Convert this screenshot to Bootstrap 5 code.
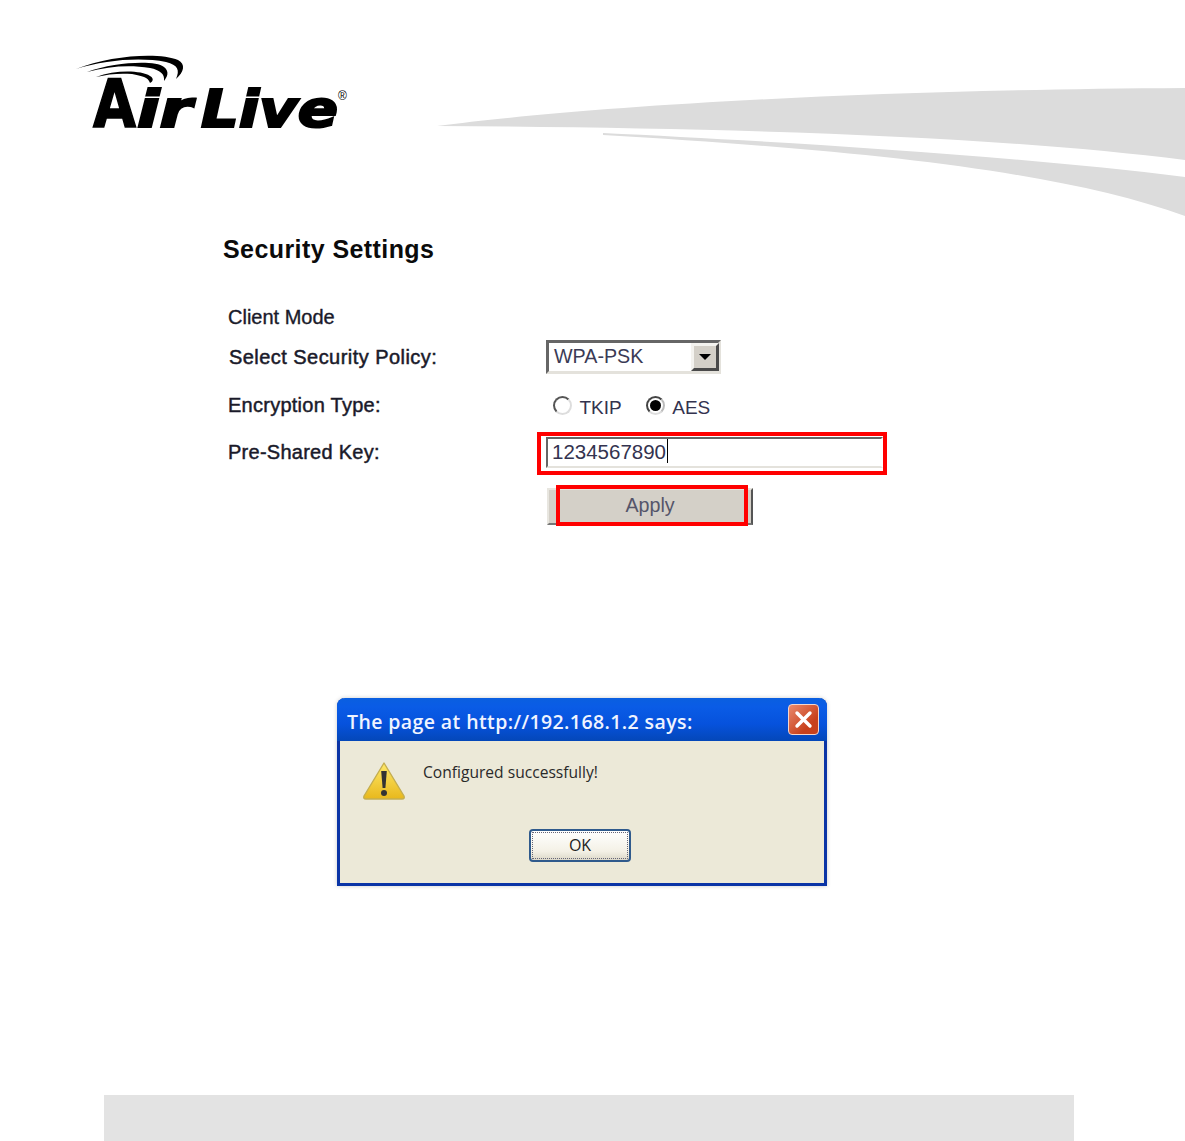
<!DOCTYPE html>
<html lang="en">
<head>
    <meta charset="UTF-8">
    <title>Security Settings</title>
    <link href="https://cdn.jsdelivr.net/npm/bootstrap@5.3.1/dist/css/bootstrap.min.css" rel="stylesheet">
    <style>
        html, body { height: 1141px; overflow: hidden; }
        body { background: #fff; color: #000; font-family: "Liberation Sans", Arial, sans-serif; }

        .page-top { height: 216px; }
        .logo-svg { width: 290px; height: 100px; margin: 50px 0 0 70px; flex: none; }
        .logo-word { font-family: "DejaVu Sans", sans-serif; font-weight: 700; font-style: italic; font-size: 51px; }
        .logo-cap { font-size: 66px; font-style: normal; }
        .swoosh { width: 748px; height: 128px; margin: 88px 0 0 77px; flex: none; }

        .settings { margin: 18px 0 0 223px; height: 464px; }
        .settings-title { font-size: 25px; font-weight: 700; line-height: 30px; margin: 0 0 38px; color: #0b0b0b; letter-spacing: .42px; }
        .form-line { display: flex; align-items: center; color: #1a1a2a; font-size: 20px; -webkit-text-stroke: .35px #1a1a2a; }
        .form-line .lbl { width: 323px; padding-left: 5px; flex: none; }
        .line-client { height: 30px; }
        .line-policy { height: 50px; }
        .line-policy .lbl { padding-left: 6px; letter-spacing: .45px; -webkit-text-stroke-width: .5px; }
        .line-enc { height: 45px; }
        .line-enc .lbl, .line-key .lbl { letter-spacing: .26px; -webkit-text-stroke-width: .45px; }
        .line-key { height: 50px; }
        .line-apply { height: 50px; margin-top: 4px; }

        .fake-select { width: 175px; height: 34px; border: 3px solid; border-color: #666 #e4e2dc #e4e2dc #666; display: flex; align-items: stretch; font-size: 19.7px; color: #3a3a55; -webkit-text-stroke: 0; line-height: 26px; padding-left: 5px; }
        .fake-select .val { flex: 1; }
        .sel-arrow { width: 28px; margin-right: -1px; background: #d4d0c8; border: 3px solid; border-color: #f4f3ef #4a4a4a #4a4a4a #f4f3ef; display: flex; align-items: center; justify-content: center; }
        .sel-arrow::after { content: ""; border: 6px solid transparent; border-top: 6px solid #000; border-bottom: 0; }

        .radio-opt { display: inline-flex; align-items: center; font-size: 19px; color: #33334f; -webkit-text-stroke: 0; }
        .radio-dot { width: 19px; height: 19px; border-radius: 50%; border: 2px solid #555; border-right-color: #ddd; border-bottom-color: #ddd; background: #fff; margin: -6px 7.5px 0 0; display: flex; align-items: center; justify-content: center; }
        .radio-dot.on { border-color: #444 #bbb #ddd #444; }
        .radio-dot.on::after { content: ""; width: 11px; height: 11px; border-radius: 50%; background: #000; }
        .radio-wrap { margin-left: 7px; display: flex; gap: 24px; padding-top: 7px; }

        .key-wrap { position: relative; width: 337px; height: 31px; }
        .key-input { height: 31px; border: 2px solid; border-color: #666 #fff #e4e2dc #666; padding: 0 0 2px 4px; font-size: 20.5px; line-height: 27px; color: #33334f; -webkit-text-stroke: 0; display: flex; align-items: center; }
        .caret-bar { width: 1px; height: 24px; background: #000; margin-left: 1px; }
        .red-frame { position: absolute; border: 4px solid #f00; pointer-events: none; }
        .key-wrap .red-frame { left: -9px; top: -5px; width: 350px; height: 43px; }

        .apply-wrap { position: relative; margin-left: 1px; width: 206px; height: 37px; }
        .apply-fake { width: 206px; height: 37px; background: #d4d0c8; border: 2px solid; border-color: #e8e6e0 #555 #777 #e8e6e0; font-size: 19.7px; color: #55556a; -webkit-text-stroke: 0; display: flex; align-items: center; justify-content: center; }
        .apply-wrap .red-frame { left: 9px; top: -3px; width: 192px; height: 41px; }

        .alert-box { width: 490px; height: 188px; margin-left: 337px; background: #ece9d8; border: 3px solid #0a34a6; border-top: 0; border-radius: 8px 8px 0 0; box-shadow: 0 0 4px #ccc; }
        .alert-head { height: 43px; margin: 0 -3px; border-radius: 8px 8px 0 0; background: linear-gradient(#0a5fe0, #0a5ce6 20%, #0652dd 60%, #0447b8); color: #f0f4ff; display: flex; align-items: center; justify-content: space-between; padding: 0 8px 0 10px; font-family: "Open Sans", sans-serif; font-weight: 600; font-size: 19.5px; letter-spacing: .4px; }
        .alert-title { padding-top: 4px; }
        .close-x { width: 31px; height: 31px; border-radius: 4px; border: 1px solid #f3d5cc; background: linear-gradient(135deg, #e98a6d, #c8401c 70%); display: flex; align-items: center; justify-content: center; }
        .alert-body { display: flex; padding: 20px 0 0 22px; height: 82px; }
        .warn-svg { width: 44px; height: 40px; flex: none; }
        .alert-msg { margin: 2px 0 0 17px; font-family: "Open Sans", sans-serif; font-size: 15.6px; line-height: 18px; color: #2a2a2a; }
        .ok-row { display: flex; padding-left: 189px; margin-top: 6px; }
        .ok-fake { width: 102px; height: 33px; padding-bottom: 1px; border: 2px solid #2f5a8c; border-radius: 4px; background: linear-gradient(#fff, #f4f1e6 70%, #dcd8c8); outline: 1px dotted #667; outline-offset: -4px; font-family: "Open Sans", sans-serif; font-size: 16px; color: #222; display: flex; align-items: center; justify-content: center; }

        .foot-bar { position: absolute; left: 104px; top: 1095px; width: 970px; height: 46px; background: #e3e3e3; }
    </style>
</head>
<body>
    <div class="page-top d-flex align-items-start">
        <svg class="logo-svg" viewBox="0 0 290 100">
            <path d="M6 19 C40 5 90 2 108 10 C116 14 114 22 106 29 C110 20 108 15 96 12 C70 7 35 10 6 19 Z"/>
            <path d="M17 22 C45 12 85 10 94 17 C100 22 97 27 94 31 C95 24 90 20 80 18 C60 15 40 16 17 22 Z"/>
            <path d="M26 27 C45 20 70 20 80 26 C85 29 82 32 80 33 C78 27 72 26 62 24 C50 23 38 24 26 27 Z"/>
            <text class="logo-word logo-cap" x="23" y="77" textLength="43" lengthAdjust="spacingAndGlyphs" stroke="#000" stroke-width="1.6">A</text>
            <text class="logo-word" x="67" y="77" textLength="55" lengthAdjust="spacingAndGlyphs" stroke="#000" stroke-width="2.2">ir</text>
            <text class="logo-word" x="131" y="77" textLength="137" lengthAdjust="spacingAndGlyphs" stroke="#000" stroke-width="2.2">Live</text>
            <text x="268" y="50" font-size="12" font-family="Liberation Sans">®</text>
        </svg>
        <svg class="swoosh" viewBox="0 0 748 128" preserveAspectRatio="none">
            <path fill="#dcdcdc" d="M0 38 C140 20 400 2 748 0 L748 72 C560 48 300 40 0 38 Z"/>
            <path fill="#dcdcdc" d="M166 45 C330 53 560 66 748 89 L748 128 C620 82 420 62 166 47 Z"/>
        </svg>
    </div>

    <div class="settings">
        <h1 class="settings-title">Security Settings</h1>
        <div class="form-line line-client"><span class="lbl">Client Mode</span></div>
        <div class="form-line line-policy">
            <span class="lbl">Select Security Policy:</span>
            <div class="fake-select"><span class="val">WPA-PSK</span><span class="sel-arrow"></span></div>
        </div>
        <div class="form-line line-enc">
            <span class="lbl">Encryption Type:</span>
            <div class="radio-wrap">
                <span class="radio-opt"><span class="radio-dot"></span>TKIP</span>
                <span class="radio-opt"><span class="radio-dot on"></span>AES</span>
            </div>
        </div>
        <div class="form-line line-key">
            <span class="lbl">Pre-Shared Key:</span>
            <div class="key-wrap">
                <div class="key-input">1234567890<span class="caret-bar"></span></div>
                <div class="red-frame"></div>
            </div>
        </div>
        <div class="form-line line-apply">
            <span class="lbl"></span>
            <div class="apply-wrap">
                <div class="apply-fake">Apply</div>
                <div class="red-frame"></div>
            </div>
        </div>
    </div>

    <div class="alert-box">
        <div class="alert-head">
            <span class="alert-title">The page at http://192.168.1.2 says:</span>
            <span class="close-x">
                <svg width="19" height="19" viewBox="0 0 19 19"><path d="M3 3 L16 16 M16 3 L3 16" stroke="#fff" stroke-width="3.4" stroke-linecap="round"/></svg>
            </span>
        </div>
        <div class="alert-body">
            <svg class="warn-svg" viewBox="0 0 44 40">
                <defs><linearGradient id="wg" x1="0" y1="0" x2="0" y2="1"><stop offset="0" stop-color="#ffe96a"/><stop offset="1" stop-color="#e8b81c"/></linearGradient></defs>
                <path d="M22 2 L42 35 Q43 38 40 38 L4 38 Q1 38 2 35 Z" fill="url(#wg)" stroke="#c4ae50" stroke-width="1.4" stroke-linejoin="round"/>
                <path d="M19.2 10 L24.8 10 L23.4 27 L20.6 27 Z" fill="#333"/>
                <circle cx="22" cy="32" r="3" fill="#333"/>
            </svg>
            <div class="alert-msg">Configured successfully!</div>
        </div>
        <div class="ok-row"><div class="ok-fake">OK</div></div>
    </div>

    <div class="foot-bar"></div>

    <script src="https://cdn.jsdelivr.net/npm/bootstrap@5.3.1/dist/js/bootstrap.bundle.min.js"></script>
</body>
</html>
